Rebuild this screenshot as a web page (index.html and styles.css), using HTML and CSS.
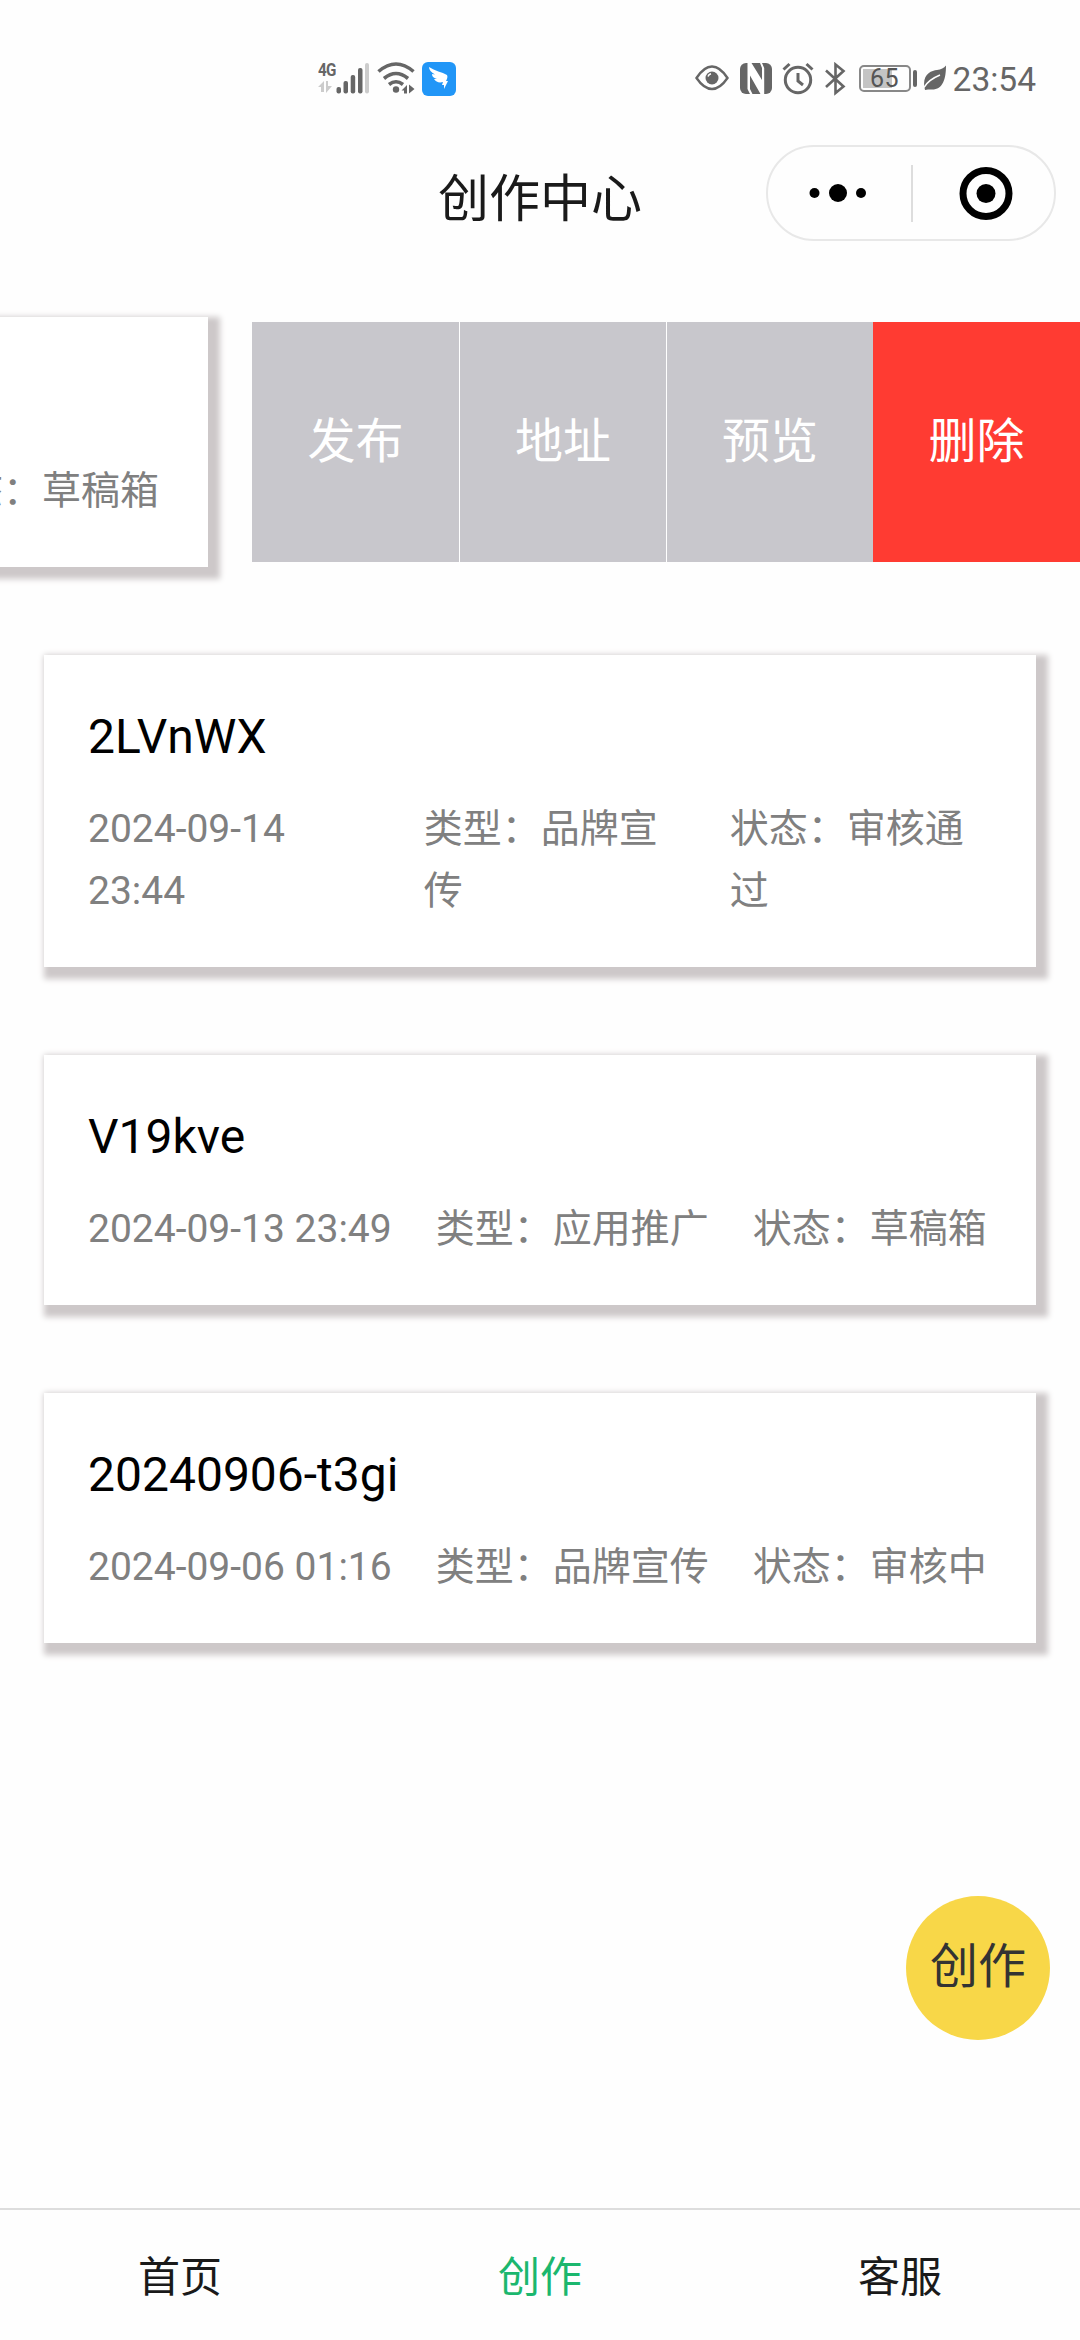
FILE: index.html
```html
<!DOCTYPE html>
<html lang="zh-CN">
<head>
    <meta charset="UTF-8">
    <meta name="viewport" content="width=device-width, initial-scale=1.0">
    <title>创作中心</title>
    <link rel="stylesheet" href="styles.css">
</head>
<body>
    <!-- 状态栏 -->
    <div class="status-bar">
        <div class="status-left">
            <div class="network">
                <span class="network-type">4G</span>
                <svg width="15" height="12" viewBox="0 0 15 12" fill="#ccc">
                    <path d="M6 0v11H3V6H0zM8 0h2v5h4L8 12z"/>
                </svg>
            </div>
            <svg class="signal" width="34" height="34" viewBox="0 0 34 34" fill="#666">
                <rect x="1.5" y="25" width="4.5" height="6.5" rx="2"/>
                <rect x="8.5" y="19" width="4.5" height="12.5" rx="2"/>
                <rect x="15.7" y="13" width="4.5" height="18.5" rx="2"/>
                <rect x="23" y="6" width="4.5" height="25.5" rx="2"/>
                <rect x="30" y="1" width="4" height="30.5" rx="2" fill="#ccc"/>
            </svg>
            <svg class="wifi" width="38" height="34" viewBox="0 0 38 34" fill="none" stroke="#666" stroke-width="3.6">
                <path d="M1.5 9.5Q19-5.5 36.5 9.5M7 16.5Q19 6.5 31 16.5M12 22.5Q19 17 26 22.5"/>
                <circle cx="19" cy="27.5" r="3.2" fill="#666" stroke="none"/>
                <path d="M30 23v8.5h-3v-3h-2.500zM32 22.500l5.500 4.500-5.500 4.500z" fill="#666" stroke="none"/>
            </svg>
            <svg class="app" width="34" height="34" viewBox="0 0 34 34">
                <rect width="34" height="34" rx="6" fill="#2196f7"/>
                <path d="M7 5c6 4 13 5 18 8 1 2 0 4-1 6h2l-4 8v-4h-2l1-3c-4 1-7 0-9-3l3 0c-3-1-5-2-5-5l3 .5C9 10 7 8 7 5z" fill="#fff"/>
            </svg>
        </div>
        <div class="status-right">
            <svg width="34" height="34" viewBox="0 0 34 34" fill="none" stroke="#666" stroke-width="2.4">
                <path d="M1.5 16Q9 4.500 17 4.500T32.500 16Q25 27 17 27T1.500 16z"/>
                <circle cx="17" cy="16" r="6.5" fill="#666" stroke="none"/>
                <path d="M13 14.5q.8-2.300 3-2.800" stroke="#fff" stroke-width="1.5"/>
            </svg>
            <svg class="nfc" width="32" height="34" viewBox="0 0 32 34">
                <rect y="1" width="32" height="31" rx="6" fill="#666"/>
                <path d="M7.500 1h4l10.500 17V6l-2-5h2l2.200 5v26h-3.700L10 13.500V27l2.500 5H10l-2.500-5z" fill="#fff"/>
            </svg>
            <svg class="alarm" width="32" height="34" viewBox="0 0 32 34" fill="none" stroke="#666" stroke-width="3">
                <circle cx="16" cy="18" r="12.7"/>
                <path d="M1.5 7.5l6-5.500M24.500 2l6 5.500M16 11v8l5 4"/>
            </svg>
            <svg class="bluetooth" width="22" height="34" viewBox="0 0 22 34" fill="none" stroke="#666" stroke-width="2.6">
                <path d="M2 8.5l17.500 16-8 6.500V2.500l8 6.500L2 25"/>
            </svg>
            <div class="battery">65</div>
            <div class="battery-cap"></div>
            <svg class="leaf" width="24" height="34" viewBox="0 0 24 34">
                <path d="M23 3.5C23 17 20 27.500 9 27.500H5L2 28C-2 13 8 8.500 14 8c4-.5 7-2 9-4.500z" fill="#666"/>
                <path d="M1 25.500Q5 18 17 13" fill="none" stroke="#fff" stroke-width="1.5"/>
            </svg>
            <span class="time">23:54</span>
        </div>
    </div>

    <!-- 导航栏 -->
    <div class="nav-bar">
        <h1 class="nav-title">创作中心</h1>
        <div class="capsule">
            <svg width="143" height="92" viewBox="0 0 143 92">
                <circle cx="46.5" cy="46" r="5"/>
                <circle cx="70" cy="46" r="9"/>
                <circle cx="93" cy="46" r="5"/>
            </svg>
            <span class="capsule-line"></span>
            <svg width="140" height="92" viewBox="0 0 140 92">
                <circle cx="73" cy="46.5" r="23" fill="none" stroke="#000" stroke-width="7"/>
                <circle cx="73" cy="46.5" r="9.5"/>
            </svg>
        </div>
    </div>

    <!-- 作品列表 -->
    <div class="list">
        <div class="swipe-cell">
            <div class="card card-swiped">
                <div class="card-title"></div>
                <div class="card-info">
                    <span>状态：草稿箱</span>
                </div>
            </div>
            <div class="actions">
                <div class="action">发布</div>
                <div class="action">地址</div>
                <div class="action">预览</div>
                <div class="action action-delete">删除</div>
            </div>
        </div>

        <div class="card">
            <div class="card-title">2LVnWX</div>
            <div class="card-info">
                <span>2024-09-14 23:44</span>
                <span>类型：品牌宣传</span>
                <span>状态：审核通过</span>
            </div>
        </div>

        <div class="card">
            <div class="card-title">V19kve</div>
            <div class="card-info">
                <span>2024-09-13 23:49</span>
                <span>类型：应用推广</span>
                <span>状态：草稿箱</span>
            </div>
        </div>

        <div class="card">
            <div class="card-title">20240906-t3gi</div>
            <div class="card-info">
                <span>2024-09-06 01:16</span>
                <span>类型：品牌宣传</span>
                <span>状态：审核中</span>
            </div>
        </div>
    </div>

    <!-- 悬浮创作按钮 -->
    <div class="create-button">创作</div>

    <!-- 底部标签栏 -->
    <div class="tab-bar">
        <div class="tab">首页</div>
        <div class="tab active">创作</div>
        <div class="tab">客服</div>
    </div>
</body>
</html>
```
FILE: styles.css
```css
* {
    box-sizing: border-box;
}

body {
    margin: 0;
    height: 2340px;
    display: flex;
    flex-direction: column;
    overflow: hidden;
    background: #fefefe;
    font-family: Roboto, "Noto Sans CJK SC", sans-serif;
    color: #000;
}

svg {
    display: block;
    flex: none;
}

/* 状态栏 */
.status-bar {
    height: 130px;
    padding: 62px 44px 0 318px;
    display: flex;
    justify-content: space-between;
    align-items: flex-start;
    color: #666;
}

.status-left,
.status-right {
    display: flex;
    height: 34px;
}

.network {
    width: 17px;
}

.network-type {
    display: block;
    height: 19px;
    font-size: 19px;
    line-height: 16px;
    font-weight: bold;
    letter-spacing: -1px;
    transform: scaleX(0.8);
    transform-origin: left;
}

.wifi {
    margin-left: 8px;
}

.app {
    margin-left: 7px;
}

.nfc {
    margin-left: 11px;
}

.alarm {
    margin-left: 10px;
}

.bluetooth {
    margin-left: 10px;
}

.battery {
    width: 52px;
    height: 27px;
    margin: 3px 0 0 13px;
    border: 2px solid #888;
    border-radius: 5px;
    background: linear-gradient(#c4c4c4, #c4c4c4) 2px 2px / 29px 19px no-repeat;
    font-size: 25px;
    line-height: 24px;
    letter-spacing: 0.5px;
    text-align: center;
    color: #555;
}

.battery-cap {
    width: 4px;
    height: 17px;
    margin: 8px 6px 0 2px;
    border-radius: 2px;
    background: #666;
}

.time {
    margin-left: 6px;
    font-size: 33.5px;
    line-height: 35px;
}

/* 导航栏 */
.nav-bar {
    height: 130px;
    padding: 15px 24px 0 438px;
    display: flex;
    justify-content: space-between;
}

.nav-title {
    margin: 0;
    font-size: 51px;
    line-height: 109px;
    font-weight: normal;
    color: #1a1a1a;
}

.capsule {
    width: 290px;
    height: 96px;
    border: 2px solid #e8e8e8;
    border-radius: 48px;
    display: flex;
    align-items: center;
}

.capsule-line {
    width: 2px;
    height: 57px;
    background: #ddd;
}

/* 列表 */
.list {
    padding: 57px 44px 0;
    display: flex;
    flex-direction: column;
    gap: 88px;
}

.card {
    padding: 43px 44px 45px;
    background: #fff;
    box-shadow: 6px 6px 6px 6px #cdc8c9;
}

.card-title {
    height: 77px;
    font-size: 48px;
    line-height: 77px;
}

.card-info {
    margin-top: 23px;
    display: flex;
    gap: 44px;
    font-size: 39px;
    line-height: 62px;
    color: #808080;
}

/* 左滑后露出操作按钮 */
.swipe-cell {
    margin: 0 -44px;
    display: flex;
    justify-content: space-between;
    align-items: center;
}

.card-swiped {
    width: 992px;
    margin-left: -784px;
    flex: none;
}

.card-swiped .card-info {
    justify-content: flex-end;
    padding-right: 5px;
}

.actions {
    display: flex;
    flex: none;
}

.action {
    width: 207px;
    height: 240px;
    background: #c8c7cc;
    font-size: 48px;
    line-height: 240px;
    text-align: center;
    color: #fff;
}

.action:nth-child(2),
.action:nth-child(3) {
    border-left: 1px solid #fff;
}

.action-delete {
    background: #ff3b32;
}

/* 悬浮按钮 */
.create-button {
    position: fixed;
    right: 30px;
    bottom: 300px;
    width: 144px;
    height: 144px;
    border-radius: 50%;
    background: #f8d748;
    font-size: 48px;
    line-height: 142px;
    text-align: center;
    color: #333;
}

/* 标签栏 */
.tab-bar {
    margin-top: auto;
    height: 132px;
    border-top: 2px solid #ddd;
    display: flex;
}

.tab {
    flex: 1;
    font-size: 42px;
    line-height: 135px;
    text-align: center;
    color: #1a1a1a;
}

.tab.active {
    color: #1bb76e;
}
```
